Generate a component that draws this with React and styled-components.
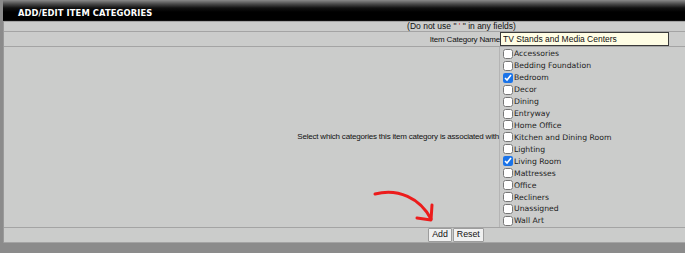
import React from "react";
import styled, { createGlobalStyle } from "styled-components";

const Global = createGlobalStyle`
  html, body { margin: 0; padding: 0; overflow: hidden; background: #8b8b8b; }
  body { font-family: "Liberation Sans", Arial, sans-serif; }
`;

const Page = styled.div`
  position: relative;
  width: 685px;
  height: 253px;
  overflow: hidden;
  background: #8b8b8b;
`;

const Frame = styled.div`
  padding-left: 3px;
  width: 916px;
`;

const HeaderBar = styled.div`
  height: 22px;
  box-sizing: border-box;
  padding: 7px 0 0 15px;
  background: linear-gradient(#8a8a8a 0px, #4a4a4a 4px, #111 8px, #000 12px, #000 20px, #3a3a3a 22px);
  color: #fff;
  font-family: "DejaVu Sans", Verdana, sans-serif;
  font-weight: bold;
  font-size: 8.35px;
  letter-spacing: 0.1px;
  line-height: 12px;
`;

const Table = styled.table`
  width: 916px;
  border-collapse: separate;
  border-spacing: 0 1px;
  margin-top: -1px;
  background: #a4a4a4;
  border-left: 1px solid #9a9a9a;
  font-size: 8px;
  letter-spacing: -0.2px;
  color: #111;
`;

const Cell = styled.td`
  background: #cbcccb;
  padding: 0;
  text-align: ${(p) => p.$align || "left"};
  vertical-align: middle;
  width: ${(p) => p.$w || "auto"};
  height: ${(p) => p.$h || "auto"};
  border-right: ${(p) => (p.$divider ? "1px solid #b4b4b4" : "none")};
  line-height: 9px;
`;

const Notice = styled.span`
  font-size: 8.5px;
  letter-spacing: 0;
`;

const Red = styled.span`
  color: #e0302a;
`;

const TextInput = styled.input`
  box-sizing: border-box;
  width: 169px;
  height: 14px;
  margin: 0;
  padding: 0 2px;
  border: 1px solid #3a3a3a;
  background: #fffde4;
  font-family: "Liberation Sans", Arial, sans-serif;
  font-size: 8.5px;
  color: #111;
  display: block;
  outline: none;
`;

const List = styled.div`
  display: flex;
  flex-direction: column;
  padding: 1px 0 0 3px;
`;

const Item = styled.label`
  display: flex;
  align-items: center;
  gap: 1px;
  height: 11.93px;
  font-family: "DejaVu Sans", Verdana, sans-serif;
  font-size: 7.7px;
  letter-spacing: 0;
  color: #222;
`;

const Check = styled.input`
  width: 10px;
  height: 10px;
  margin: 0;
  accent-color: #1a73e8;
`;

const Buttons = styled.div`
  display: flex;
  justify-content: center;
  gap: 1px;
  padding-right: 11px;
`;

const Btn = styled.button`
  font-family: "Liberation Sans", Arial, sans-serif;
  font-size: 8.8px;
  height: 14px;
  padding: 0 3px;
  margin: 0;
  border: 1px solid #9c9c9c;
  background: #f0f0f0;
  color: #111;
  line-height: 11px;
  border-radius: 1px;
`;

const ArrowSvg = styled.svg`
  position: absolute;
  left: 368px;
  top: 186px;
  pointer-events: none;
`;

const categories = [
  ["Accessories", false],
  ["Bedding Foundation", false],
  ["Bedroom", true],
  ["Decor", false],
  ["Dining", false],
  ["Entryway", false],
  ["Home Office", false],
  ["Kitchen and Dining Room", false],
  ["Lighting", false],
  ["Living Room", true],
  ["Mattresses", false],
  ["Office", false],
  ["Recliners", false],
  ["Unassigned", false],
  ["Wall Art", false],
];

export default function App() {
  return (
    <Page>
      <Global />
      <Frame>
        <HeaderBar>ADD/EDIT ITEM CATEGORIES</HeaderBar>
        <Table>
          <tbody>
            <tr>
              <Cell colSpan={2} $align="center" $h="9px">
                <Notice>
                  (Do not use " <Red>'</Red> " in any fields)
                </Notice>
              </Cell>
            </tr>
            <tr>
              <Cell $align="right" $w="496px" $h="14px">Item Category Name</Cell>
              <Cell>
                <TextInput defaultValue="TV Stands and Media Centers" />
              </Cell>
            </tr>
            <tr>
              <Cell $align="right" $divider>
                Select which categories this item category is associated with
              </Cell>
              <Cell>
                <List>
                  {categories.map(([name, checked]) => (
                    <Item key={name}>
                      <Check type="checkbox" defaultChecked={checked} />
                      {name}
                    </Item>
                  ))}
                </List>
              </Cell>
            </tr>
            <tr>
              <Cell colSpan={2} $h="13px">
                <Buttons>
                  <Btn>Add</Btn>
                  <Btn>Reset</Btn>
                </Buttons>
              </Cell>
            </tr>
          </tbody>
        </Table>
      </Frame>
      <ArrowSvg width="80" height="45" viewBox="0 0 80 45">
        <path d="M7 8 C 30 2, 52 12, 63 33" fill="none" stroke="#ec1c1c" strokeWidth="3" strokeLinecap="round" />
        <path d="M64 19 L63 34 L49 32" fill="none" stroke="#ec1c1c" strokeWidth="3" strokeLinecap="round" strokeLinejoin="round" />
      </ArrowSvg>
    </Page>
  );
}
